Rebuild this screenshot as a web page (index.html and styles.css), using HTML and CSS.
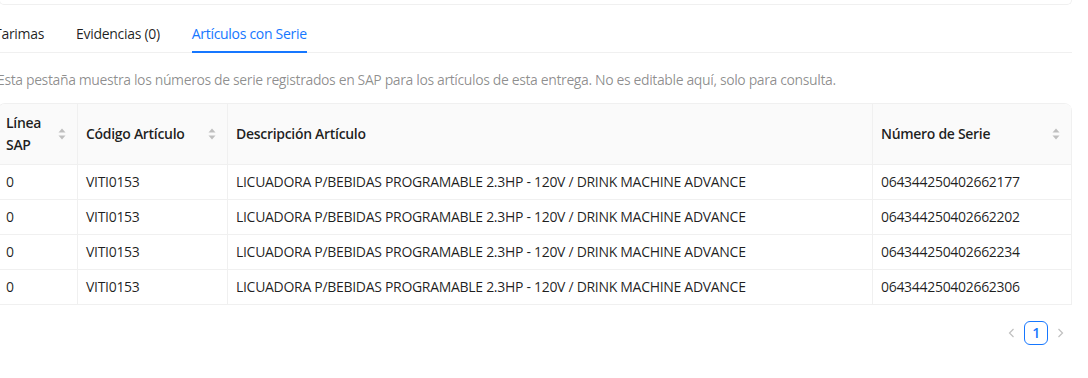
FILE: index.html
```html
<!DOCTYPE html>
<html lang="es">
<head>
  <meta charset="UTF-8" />
  <meta name="viewport" content="width=device-width, initial-scale=1.0" />
  <title>Artículos con Serie</title>
  <link rel="stylesheet" href="styles.css">
</head>
<body>
  <div class="page">
    <div class="card-tail"></div>

    <div class="tabs-nav">
      <div class="tab">Tarimas</div>
      <div class="tab">Evidencias (0)</div>
      <div class="tab active">Artículos con Serie</div>
    </div>

    <p class="hint">Esta pestaña muestra los números de serie registrados en SAP para los artículos de esta entrega. No es editable aquí, solo para consulta.</p>

    <div class="table-wrap">
      <table class="serials">
        <colgroup>
          <col style="width: 80px">
          <col style="width: 150px">
          <col style="width: 645px">
          <col>
        </colgroup>
        <thead>
          <tr>
            <th><div class="th-sort"><span>Línea SAP</span><svg class="sorter" width="8" height="12" viewBox="0 0 8 12"><path d="M4 0.5L7.5 4.5H0.5Z"/><path d="M4 11.5L7.5 7.5H0.5Z"/></svg></div></th>
            <th><div class="th-sort"><span>Código Artículo</span><svg class="sorter" width="8" height="12" viewBox="0 0 8 12"><path d="M4 0.5L7.5 4.5H0.5Z"/><path d="M4 11.5L7.5 7.5H0.5Z"/></svg></div></th>
            <th>Descripción Artículo</th>
            <th><div class="th-sort"><span>Número de Serie</span><svg class="sorter" width="8" height="12" viewBox="0 0 8 12"><path d="M4 0.5L7.5 4.5H0.5Z"/><path d="M4 11.5L7.5 7.5H0.5Z"/></svg></div></th>
          </tr>
        </thead>
        <tbody>
          <tr>
            <td>0</td>
            <td>VITI0153</td>
            <td>LICUADORA P/BEBIDAS PROGRAMABLE 2.3HP - 120V / DRINK MACHINE ADVANCE</td>
            <td>064344250402662177</td>
          </tr>
          <tr>
            <td>0</td>
            <td>VITI0153</td>
            <td>LICUADORA P/BEBIDAS PROGRAMABLE 2.3HP - 120V / DRINK MACHINE ADVANCE</td>
            <td>064344250402662202</td>
          </tr>
          <tr>
            <td>0</td>
            <td>VITI0153</td>
            <td>LICUADORA P/BEBIDAS PROGRAMABLE 2.3HP - 120V / DRINK MACHINE ADVANCE</td>
            <td>064344250402662234</td>
          </tr>
          <tr>
            <td>0</td>
            <td>VITI0153</td>
            <td>LICUADORA P/BEBIDAS PROGRAMABLE 2.3HP - 120V / DRINK MACHINE ADVANCE</td>
            <td>064344250402662306</td>
          </tr>
        </tbody>
      </table>
    </div>

    <ul class="pagination">
      <li class="page-nav disabled">
        <svg width="10" height="10" viewBox="0 0 10 10"><path d="M6.5 1L2.5 5L6.5 9" fill="none" stroke="currentColor" stroke-width="1.2"/></svg>
      </li>
      <li class="page-item active">1</li>
      <li class="page-nav disabled">
        <svg width="10" height="10" viewBox="0 0 10 10"><path d="M3.5 1L7.5 5L3.5 9" fill="none" stroke="currentColor" stroke-width="1.2"/></svg>
      </li>
    </ul>
  </div>
</body>
</html>
```

FILE: styles.css
```css
body {
  margin: 0;
  font-family: "Segoe UI", "Open Sans", sans-serif;
  font-size: 14px;
  line-height: 22px;
  letter-spacing: -0.3px;
  color: rgba(0, 0, 0, 0.88);
  background: #fff;
  overflow: hidden;
}

.page {
  width: 1073px;
  margin-left: -1px;
}

.card-tail {
  height: 4px;
  border: 1px solid #f0f0f0;
  border-top: none;
  border-radius: 0 0 8px 8px;
}

.tabs-nav {
  display: flex;
  gap: 32px;
  margin-top: 9px;
  border-bottom: 1px solid #f0f0f0;
}

.tab {
  position: relative;
  padding: 9px 0 7px;
  cursor: pointer;
}

.tab:first-child {
  margin-left: -5px;
}

.tab.active {
  color: #1677ff;
}

.tab.active::after {
  content: "";
  position: absolute;
  left: 0;
  right: 0;
  bottom: -1px;
  height: 2px;
  background: #1677ff;
}

.hint {
  margin: 16px 0 12px -2px;
  letter-spacing: -0.38px;
  color: rgba(0, 0, 0, 0.45);
}

.table-wrap {
  margin-left: -2px;
  border: 1px solid #f0f0f0;
  border-bottom: none;
  border-right: none;
  border-radius: 8px 8px 0 0;
  overflow: hidden;
}

.serials {
  width: 100%;
  table-layout: fixed;
  border-collapse: separate;
  border-spacing: 0;
}

.serials th,
.serials td {
  text-align: left;
  padding: 6px 8px;
  border-right: 1px solid #f0f0f0;
  border-bottom: 1px solid #f0f0f0;
  overflow-wrap: break-word;
}

.serials th {
  padding: 8px 8px;
  background: #fafafa;
  font-weight: 600;
}

.th-sort {
  display: flex;
  align-items: center;
  justify-content: space-between;
  gap: 4px;
}

.sorter {
  flex: none;
  margin-right: 3px;
  fill: #bfbfbf;
}

.pagination {
  display: flex;
  justify-content: flex-end;
  list-style: none;
  margin: 16px 0 0;
  padding: 0;
}

.pagination li {
  width: 24px;
  height: 24px;
  box-sizing: border-box;
  display: flex;
  align-items: center;
  justify-content: center;
  border-radius: 6px;
}

.page-nav.disabled {
  color: rgba(0, 0, 0, 0.25);
}

.page-item.active {
  border: 1px solid #1677ff;
  color: #1677ff;
  font-weight: 600;
}
```
